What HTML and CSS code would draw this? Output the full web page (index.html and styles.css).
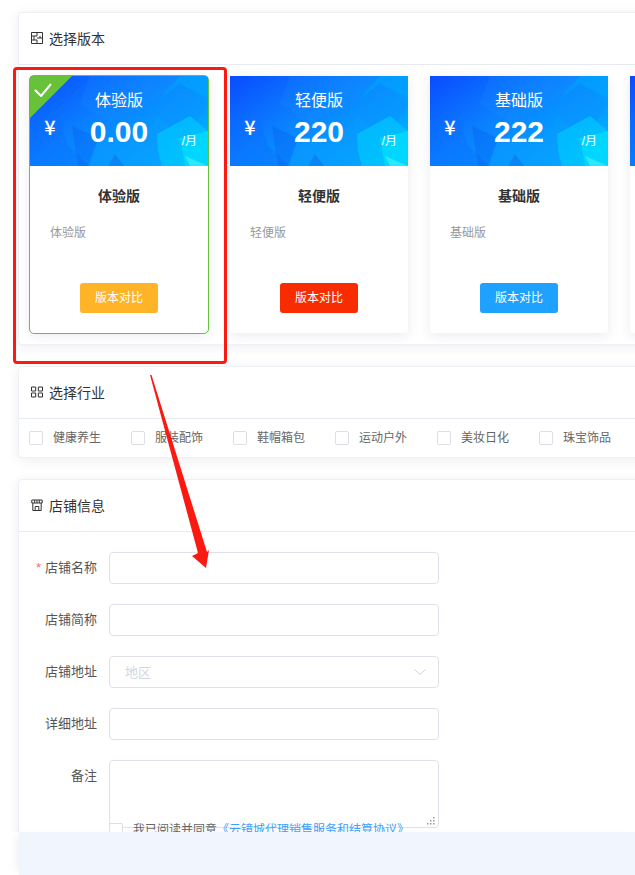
FILE: index.html
```html
<!DOCTYPE html>
<html lang="zh-CN">
<head>
<meta charset="utf-8">
<title>选择版本</title>
<link rel="stylesheet" href="styles.css">
</head>
<body>
<svg class="defs" width="0" height="0" aria-hidden="true">
  <defs>
    <linearGradient id="bannerGrad" x1="0" y1="0" x2="1" y2="0.75">
      <stop offset="0" stop-color="#0a4bff"/>
      <stop offset="0.45" stop-color="#0a80ff"/>
      <stop offset="1" stop-color="#00b0ff"/>
    </linearGradient>
    <symbol id="poly" viewBox="0 0 178 90" preserveAspectRatio="none">
      <rect width="178" height="90" fill="url(#bannerGrad)"/>
      <polygon points="60,0 150,0 130,22 80,48 50,28" fill="#1a8bff" opacity=".22"/>
      <polygon points="150,0 178,0 178,22 150,8 130,22" fill="#00aaff" opacity=".5"/>
      <polygon points="130,22 150,8 178,28 165,48 150,60 128,40" fill="#0a90ff" opacity=".45"/>
      <polygon points="0,50 30,44 38,70 60,90 0,90" fill="#0a6cff" opacity=".4"/>
      <polygon points="42,50 68,62 58,90 48,90" fill="#0a5cf0" opacity=".35"/>
      <polygon points="68,62 110,66 128,40 150,60 130,90 60,90" fill="#0b9cff" opacity=".45"/>
      <polygon points="127,58 160,40 178,55 178,90 132,90 128,75" fill="#00c8ff" opacity=".7"/>
      <polygon points="150,62 178,55 178,90 155,90" fill="#00dcff" opacity=".8"/>
      <polygon points="155,80 178,90 160,90" fill="#3cf0ff" opacity=".7"/>
      <polygon points="78,90 85,78 94,90" fill="#0a6fe8" opacity=".5"/>
    </symbol>
  </defs>
</svg>

<div class="screen">
  <main class="content">
    <section class="panel panel-version">
      <header class="panel-head">
        <svg class="head-icon" viewBox="0 0 12 12"><path d="M.5.500h11v11H.5zM.5 4h5.500M6 6h5.500M.5 8h5.500M6 .5V4M6 8v3.500M3 4v4M9 4v2" fill="none" stroke="#333" stroke-width="1"/></svg>
        <h2>选择版本</h2>
      </header>
      <div class="plans">
        <article class="plan plan-active">
          <div class="plan-banner">
            <svg class="banner-bg"><use href="#poly" width="100%" height="100%"/></svg>
            <span class="corner"></span>
            <svg class="corner-check" viewBox="0 0 18 14"><path d="M1 7l6 6L17 1" fill="none" stroke="#fff" stroke-width="2"/></svg>
            <span class="plan-title">体验版</span>
            <span class="yen">¥</span>
            <span class="price">0.00</span>
            <span class="per">/月</span>
          </div>
          <h3>体验版</h3>
          <p class="plan-desc">体验版</p>
          <button class="compare compare-amber">版本对比</button>
        </article>
        <article class="plan">
          <div class="plan-banner">
            <svg class="banner-bg"><use href="#poly" width="100%" height="100%"/></svg>
            <span class="plan-title">轻便版</span>
            <span class="yen">¥</span>
            <span class="price">220</span>
            <span class="per">/月</span>
          </div>
          <h3>轻便版</h3>
          <p class="plan-desc">轻便版</p>
          <button class="compare compare-red">版本对比</button>
        </article>
        <article class="plan">
          <div class="plan-banner">
            <svg class="banner-bg"><use href="#poly" width="100%" height="100%"/></svg>
            <span class="plan-title">基础版</span>
            <span class="yen">¥</span>
            <span class="price">222</span>
            <span class="per">/月</span>
          </div>
          <h3>基础版</h3>
          <p class="plan-desc">基础版</p>
          <button class="compare compare-blue">版本对比</button>
        </article>
        <article class="plan">
          <div class="plan-banner">
            <svg class="banner-bg"><use href="#poly" width="100%" height="100%"/></svg>
          </div>
        </article>
      </div>
    </section>

    <section class="panel panel-industry">
      <header class="panel-head">
        <svg class="head-icon" viewBox="0 0 12 12"><path d="M.5 1h4.200v4H.5zM7.300 1h4.200v4H7.300zM.5 7h4.200v4H.5zM7.300 7h4.200v4H7.300z" fill="none" stroke="#333" stroke-width="1"/></svg>
        <h2>选择行业</h2>
      </header>
      <div class="industries">
        <label class="industry"><span class="box"></span>健康养生</label>
        <label class="industry"><span class="box"></span>服装配饰</label>
        <label class="industry"><span class="box"></span>鞋帽箱包</label>
        <label class="industry"><span class="box"></span>运动户外</label>
        <label class="industry"><span class="box"></span>美妆日化</label>
        <label class="industry"><span class="box"></span>珠宝饰品</label>
      </div>
    </section>

    <section class="panel panel-store">
      <header class="panel-head">
        <svg class="head-icon" viewBox="0 0 12 12"><path d="M.8 1h10.400v3H.8zM1.800 4v7.500h8.400V4M4.200 11.500V7.500h3.600v4M3.700 1v3M6 1v3M8.300 1v3" fill="none" stroke="#333" stroke-width="1"/></svg>
        <h2>店铺信息</h2>
      </header>
      <form class="store-form">
        <div class="row"><label class="field-label"><em>*</em>店铺名称</label><input class="field" type="text"></div>
        <div class="row"><label class="field-label">店铺简称</label><input class="field" type="text"></div>
        <div class="row"><label class="field-label">店铺地址</label>
          <div class="field select"><span>地区</span>
            <svg class="chev" viewBox="0 0 12 6"><path d="M.5.500L6 5.500l5.500-5" fill="none" stroke="#cfd2d9" stroke-width="1"/></svg>
          </div>
        </div>
        <div class="row"><label class="field-label">详细地址</label><input class="field" type="text"></div>
        <div class="row"><label class="field-label">备注</label>
          <div class="area-wrap">
            <textarea class="field area"></textarea>
            <svg class="grip" viewBox="0 0 8 8"><path d="M6 0h1.500v1.500H6zM3 3h1.500v1.500H3zM6 3h1.500v1.500H6zM0 6h1.500v1.500H0zM3 6h1.500v1.500H3zM6 6h1.500v1.500H6z" fill="#9a9a9a"/></svg>
          </div>
        </div>
        <div class="agree"><span class="box"></span>我已阅读并同意<a>《云镜城代理销售服务和结算协议》</a></div>
      </form>
    </section>
  </main>
  <div class="footer-band"></div>

  <div class="mark-box"></div>
  <svg class="mark-arrow" viewBox="148 372 64 200" aria-hidden="true">
    <polygon points="150,375 151.500,375 207,552 209,550 206,568 192,556 198,553" fill="#fb1a12"/>
  </svg>
</div>
</body>
</html>
```

FILE: styles.css
```css
* { box-sizing: border-box; }
html, body { margin: 0; padding: 0; }
body {
  width: 635px;
  height: 875px;
  overflow: hidden;
  background: #fff;
  font-family: "Liberation Sans", "Noto Sans CJK SC", sans-serif;
  color: #333;
}
.defs { position: absolute; }
.screen { position: relative; width: 635px; height: 875px; overflow: hidden; }
.content {
  height: 832px;
  overflow: hidden;
  padding: 12px 0 0 18px;
  background: #fff;
}
.footer-band { height: 43px; margin-left: 19px; background: #f1f5fd; box-shadow: -6px 0 8px -4px rgba(40,50,90,.08); }

.panel {
  width: 680px;
  background: #fff;
  border: 1px solid #eef0f6;
  border-radius: 4px;
  box-shadow: 0 2px 12px rgba(40,50,90,.09);
  margin-bottom: 21px;
}
.panel-head {
  display: flex;
  align-items: center;
  height: 52px;
  padding: 0 0 2px 12px;
  border-bottom: 1px solid #e9ebf3;
}
.head-icon { width: 12px; height: 12px; margin-right: 6px; flex: none; }
.panel-head h2 { margin: 0; font-size: 14px; font-weight: 400; color: #333; }

.panel-version { height: 333px; }
.plans { display: flex; gap: 22px; padding: 11px 0 0 11px; }
.plan {
  position: relative;
  flex: none;
  width: 178px;
  height: 257px;
  background: #fff;
  border-radius: 3px;
  box-shadow: 0 2px 12px rgba(40,50,90,.1);
  text-align: center;
}
.plan-active { outline: 1px solid #67c23a; border-radius: 4px; }
.plan-banner {
  position: relative;
  height: 90px;
  overflow: hidden;
  color: #fff;
}
.plan-active .plan-banner { border-radius: 3px 3px 0 0; }
.banner-bg { position: absolute; inset: 0; width: 100%; height: 100%; display: block; }
.corner {
  position: absolute; left: 0; top: 0; width: 0; height: 0;
  border-style: solid; border-width: 42px 42px 0 0;
  border-color: #67c23a transparent transparent transparent;
}
.corner-check { position: absolute; left: 4px; top: 7px; width: 18px; height: 14px; }
.plan-title { position: absolute; left: 0; right: 0; top: 14px; font-size: 16px; line-height: 22px; }
.yen { position: absolute; left: 10px; top: 37px; width: 20px; text-align: center; font-family: "Noto Sans CJK SC", sans-serif; font-size: 20px; line-height: 28px; font-weight: 500; }
.price { position: absolute; left: 0; right: 0; top: 38px; font-size: 30px; line-height: 36px; font-weight: 700; }
.per { position: absolute; right: 11px; top: 56px; font-size: 12px; line-height: 18px; }
.plan h3 { margin: 20px 0 0; font-size: 14px; line-height: 20px; font-weight: 700; color: #333; }
.plan-desc { margin: 18px 0 0; padding-left: 20px; text-align: left; font-size: 12px; line-height: 18px; color: #999; }
.compare {
  display: block;
  width: 78px;
  height: 30px;
  margin: 41px auto 0;
  padding: 0;
  border: 0;
  border-radius: 3px;
  color: #fff;
  font: 12px/30px "Liberation Sans", "Noto Sans CJK SC", sans-serif;
}
.compare-amber { background: #ffb327; }
.compare-red { background: #f82c00; }
.compare-blue { background: #1ea1ff; }

.panel-industry { height: 92px; }
.industries { display: flex; padding: 10px 0 0 10px; }
.industry { display: flex; align-items: center; width: 102px; flex: none; font-size: 12px; line-height: 18px; color: #666; white-space: nowrap; }
.box { display: block; width: 14px; height: 14px; flex: none; margin-right: 10px; background: #fff; border: 1px solid #dcdfe6; border-radius: 2px; }

.panel-store { height: 500px; }
.store-form { padding-top: 20px; }
.row { display: flex; align-items: flex-start; margin-bottom: 20px; }
.field-label { width: 78px; margin-right: 12px; text-align: right; font-size: 13px; line-height: 32px; color: #555; flex: none; }
.field-label em { font-style: normal; color: #f56c6c; margin-right: 4px; }
.field {
  display: block;
  width: 330px;
  height: 32px;
  margin: 0;
  padding: 0 15px;
  background: #fff;
  border: 1px solid #dfe0e8;
  border-radius: 4px;
  outline: 0;
  font: 13px "Liberation Sans", "Noto Sans CJK SC", sans-serif;
}
.select { display: flex; align-items: center; justify-content: space-between; padding-bottom: 1px; color: #d4d6dc; }
.chev { width: 12px; height: 6px; margin-right: -3px; }
.area-wrap { position: relative; }
.area { height: 68px; resize: none; }
.grip { position: absolute; right: 4px; bottom: 3px; width: 8px; height: 8px; }
.agree {
  display: flex;
  align-items: center;
  margin: -27px 0 0 90px;
  position: relative;
  font-size: 12px;
  line-height: 18px;
  color: #666;
}
.agree a { color: #409eff; }

.mark-box {
  position: absolute;
  left: 13px; top: 67px;
  width: 214px; height: 297px;
  border: 3px solid #fb1a12;
  border-radius: 4px;
}
.mark-arrow { position: absolute; left: 148px; top: 372px; width: 64px; height: 200px; }
```
